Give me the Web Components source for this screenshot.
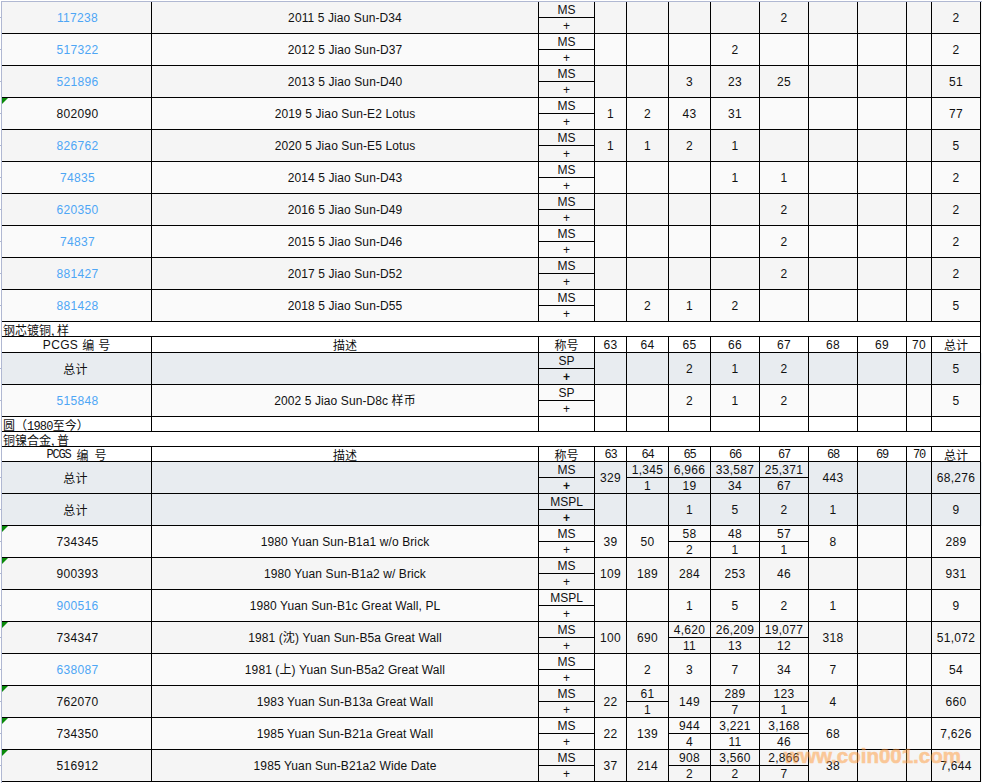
<!DOCTYPE html>
<html lang="zh">
<head>
<meta charset="utf-8">
<title>PCGS</title>
<style>
html,body{margin:0;padding:0;background:#fff;overflow:hidden}
body{font:12px "Liberation Sans","Noto Sans CJK SC",sans-serif;color:#111}
.m{font:12px "Liberation Mono",monospace;letter-spacing:-.8px}
</style>
</head>
<body>
<sheet-page>
<grade-row num="117238" link tone="a" des="MS" vals="- - - - 2 - - - 2">2011 5 Jiao Sun-D34</grade-row>
<grade-row num="517322" link tone="b" des="MS" vals="- - - 2 - - - - 2">2012 5 Jiao Sun-D37</grade-row>
<grade-row num="521896" link tone="a" des="MS" vals="- - 3 23 25 - - - 51">2013 5 Jiao Sun-D40</grade-row>
<grade-row num="802090" flag tone="b" des="MS" vals="1 2 43 31 - - - - 77">2019 5 Jiao Sun-E2 Lotus</grade-row>
<grade-row num="826762" link tone="a" des="MS" vals="1 1 2 1 - - - - 5">2020 5 Jiao Sun-E5 Lotus</grade-row>
<grade-row num="74835" link tone="b" des="MS" vals="- - - 1 1 - - - 2">2014 5 Jiao Sun-D43</grade-row>
<grade-row num="620350" link tone="a" des="MS" vals="- - - - 2 - - - 2">2016 5 Jiao Sun-D49</grade-row>
<grade-row num="74837" link tone="b" des="MS" vals="- - - - 2 - - - 2">2015 5 Jiao Sun-D46</grade-row>
<grade-row num="881427" link tone="a" des="MS" vals="- - - - 2 - - - 2">2017 5 Jiao Sun-D52</grade-row>
<grade-row num="881428" link tone="b" des="MS" vals="- 2 1 2 - - - - 5">2018 5 Jiao Sun-D55</grade-row>
<sheet-section>钢芯镀铜, 样</sheet-section>
<sheet-header></sheet-header>
<grade-row num="总计" tone="t" des="SP" vals="- - 2 1 2 - - - 5"></grade-row>
<grade-row num="515848" link tone="b" des="SP" vals="- - 2 1 2 - - - 5">2002 5 Jiao Sun-D8c 样币</grade-row>
<sheet-section ruled>圆（<span class="m">1980</span>至今）</sheet-section>
<sheet-section>铜镍合金, 普</sheet-section>
<sheet-header mono></sheet-header>
<grade-row num="总计" tone="t" des="MS" vals="329 1,345/1 6,966/19 33,587/34 25,371/67 443 - - 68,276"></grade-row>
<grade-row num="总计" tone="t" des="MSPL" vals="- - 1 5 2 1 - - 9"></grade-row>
<grade-row num="734345" flag tone="b" des="MS" vals="39 50 58/2 48/1 57/1 8 - - 289">1980 Yuan Sun-B1a1 w/o Brick</grade-row>
<grade-row num="900393" flag tone="a" des="MS" vals="109 189 284 253 46 - - - 931">1980 Yuan Sun-B1a2 w/ Brick</grade-row>
<grade-row num="900516" link tone="b" des="MSPL" vals="- - 1 5 2 1 - - 9">1980 Yuan Sun-B1c Great Wall, PL</grade-row>
<grade-row num="734347" flag tone="a" des="MS" vals="100 690 4,620/11 26,209/13 19,077/12 318 - - 51,072">1981 (沈) Yuan Sun-B5a Great Wall</grade-row>
<grade-row num="638087" link tone="b" des="MS" vals="- 2 3 7 34 7 - - 54">1981 (上) Yuan Sun-B5a2 Great Wall</grade-row>
<grade-row num="762070" flag tone="a" des="MS" vals="22 61/1 149 289/7 123/1 4 - - 660">1983 Yuan Sun-B13a Great Wall</grade-row>
<grade-row num="734350" flag tone="b" des="MS" vals="22 139 944/4 3,221/11 3,168/46 68 - - 7,626">1985 Yuan Sun-B21a Great Wall</grade-row>
<grade-row num="516912" flag tone="a" des="MS" vals="37 214 908/2 3,560/2 2,866/7 38 - - 7,644">1985 Yuan Sun-B21a2 Wide Date</grade-row>
<water-mark>www.coin001.com</water-mark>
</sheet-page>
<script>
const COLS = '150px 387px 56px 32px 42px 42px 49px 49px 49px 49px 25px 49px';
const FONT = '"Liberation Sans","Noto Sans CJK SC",sans-serif';
const BASE = `
  .grid{display:grid;grid-template-columns:${COLS};width:979px}
  .c{border-right:1px solid #000;display:flex;align-items:center;justify-content:center;min-width:0;white-space:nowrap;box-sizing:border-box}
  .split{display:grid;grid-template-rows:16px 15px;border-right:1px solid #000;min-width:0}
  .split>span{display:flex;align-items:center;justify-content:center;white-space:nowrap;box-sizing:border-box}
  .split>span:first-child{border-bottom:1px solid #000}
  .n{letter-spacing:.33px}
`;
function mk(host, html){
  const r = host.attachShadow({mode:'open'});
  r.innerHTML = html;
  return r;
}
customElements.define('sheet-page', class extends HTMLElement{
  constructor(){
    super();
    mk(this, `<style>
      :host{display:block;position:relative;margin:1px 0 0 1px;width:981px;height:782px;border-top:1px solid #b0b8d2;border-left:1px solid #b0b8d2;box-sizing:border-box;color:#111;font:12px ${FONT}}
      .body{display:flex;flex-direction:column}
    </style><div class="body"><slot></slot></div>`);
  }
});
customElements.define('grade-row', class extends HTMLElement{
  connectedCallback(){
    if(this.shadowRoot) return;
    const tone = this.getAttribute('tone')||'a';
    const bg = {a:'#f5f5f5',b:'#fafafa',t:'#e8ecf0'}[tone];
    const num = this.getAttribute('num')||'';
    const link = this.hasAttribute('link');
    const flag = this.hasAttribute('flag');
    const des = this.getAttribute('des')||'';
    const vals = (this.getAttribute('vals')||'').split(' ');
    const cells = vals.map(v=>{
      if(v==='-') return '<div class="c"></div>';
      if(v.includes('/')){
        const [a,b]=v.split('/');
        return `<div class="split"><span class="n">${a}</span><span class="n">${b}</span></div>`;
      }
      return `<div class="c n">${v}</div>`;
    }).join('');
    mk(this, `<style>${BASE}
      :host{display:block;position:relative;height:32px;background:${bg};box-sizing:border-box}
      .grid{height:32px;border-bottom:1px solid #000;box-sizing:border-box;grid-template-rows:31px}
      .link{color:#4ea6f5}
      .plus{${tone==='t'?'font-weight:bold':''}}
      .code{padding-left:2px}
      .sum{padding-right:2px}
      .desc{letter-spacing:.1px;line-height:14px}
      .inner{display:block;height:14px;line-height:14px;overflow:visible}
      .flag{position:absolute;left:0;top:0;width:0;height:0;border-top:6px solid #0a8a0a;border-right:6px solid transparent}
      .tl,.tr{position:absolute;top:15px;width:1px;height:1px}
      .tl{left:-2px;background:#b0b8d2}
      .tr{right:-2px;background:#000}
    </style>
    <div class="grid">
      <div class="c n ${tone==='t'?'sum':'code'} ${link?'link':''}">${num}</div>
      <div class="c desc"><span class="inner"><slot></slot></span></div>
      <div class="split"><span>${des}</span><span class="plus">+</span></div>
      ${cells}
    </div>
    ${flag?'<i class="flag"></i>':''}<i class="tl"></i><i class="tr"></i>`);
  }
});
customElements.define('sheet-section', class extends HTMLElement{
  connectedCallback(){
    if(this.shadowRoot) return;
    const ruled = this.hasAttribute('ruled');
    const blank = '<div class="c"></div>'.repeat(11);
    mk(this, `<style>${BASE}
      :host{display:block;height:15px;background:#fff;font:12px "Noto Sans CJK SC",sans-serif}
      .grid{height:15px;border-bottom:1px solid #000;box-sizing:border-box;grid-template-rows:14px}
      .lab{grid-column:1/-1;display:block;padding:1px 0 0 1px;white-space:nowrap;line-height:14px;overflow:visible;border-right:1px solid #000;height:14px;box-sizing:border-box}
      .grid.ruled .lab{grid-column:auto}
    </style>
    <div class="grid ${ruled?'ruled':''}">
      <div class="lab"><slot></slot></div>${ruled?blank:''}
    </div>`);
  }
});
customElements.define('sheet-header', class extends HTMLElement{
  connectedCallback(){
    if(this.shadowRoot) return;
    const mono = this.hasAttribute('mono');
    const h = mono?15:16;
    const grades = ['63','64','65','66','67','68','69','70'].map(g=>`<div class="c num">${g}</div>`).join('');
    mk(this, `<style>${BASE}
      :host{display:block;height:${h}px;background:#fff}
      .grid{height:${h}px;border-bottom:1px solid #000;box-sizing:border-box;grid-template-rows:${h-1}px}
      .num,.lat{${mono?'font:12px/14px "Liberation Mono",monospace;letter-spacing:-1.2px;padding-top:2px':'letter-spacing:.33px'}}
      .cjk{font:12px "Noto Sans CJK SC",sans-serif;letter-spacing:0}
      .pcgs{gap:${mono?'6px':'4px'}}
    </style>
    <div class="grid">
      <div class="c pcgs"><span class="lat">PCGS</span><span class="cjk">编</span><span class="cjk">号</span></div>
      <div class="c"><span class="cjk">描述</span></div>
      <div class="c"><span class="cjk">称号</span></div>
      ${grades}
      <div class="c"><span class="cjk">总计</span></div>
    </div>`);
  }
});
customElements.define('water-mark', class extends HTMLElement{
  constructor(){
    super();
    mk(this, `<style>
      :host{display:block;position:absolute;left:782px;top:742px;color:#ff9a3c;opacity:.5;-webkit-text-stroke:.6px #ff9a3c;font:bold 20.5px "Liberation Sans",sans-serif;line-height:24px;white-space:nowrap;pointer-events:none}
    </style><slot></slot>`);
  }
});
</script>
</body>
</html>
